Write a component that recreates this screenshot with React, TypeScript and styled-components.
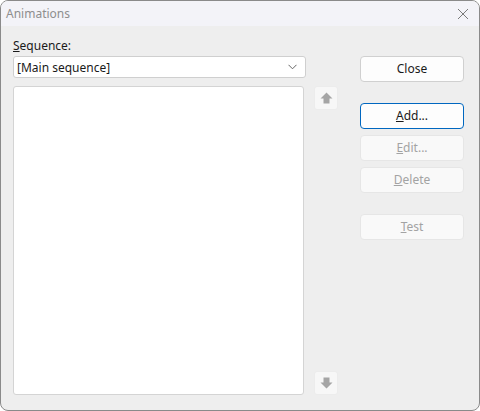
import styled, { createGlobalStyle } from "styled-components"

const GlobalStyle = createGlobalStyle`
  html, body {
    margin: 0;
    padding: 0;
    background: #ffffff;
  }
  * {
    box-sizing: border-box;
  }
`

const Window = styled.div`
  width: 480px;
  height: 411px;
  border: 1px solid #8a8a8a;
  border-radius: 8px;
  overflow: hidden;
  display: flex;
  flex-direction: column;
  font-family: "Noto Sans", "Open Sans", sans-serif;
  font-size: 12px;
  color: #1a1a1a;
  background: #eeeeee;
`

const TitleBar = styled.div`
  height: 25px;
  flex: none;
  display: flex;
  align-items: center;
  justify-content: space-between;
  padding: 0 10px 0 5px;
  background: #f3f3f8;
  color: #8e8e8e;
`

const CloseGlyph = styled.svg`
  width: 12px;
  height: 12px;
  margin-top: 1px;
`

const Body = styled.div`
  flex: 1;
  display: flex;
  padding: 0 14px 15px 12px;
`

const LeftCol = styled.div`
  width: 293px;
  display: flex;
  flex-direction: column;
  padding-top: 12px;
`

const Label = styled.label`
  height: 16px;
  line-height: 16px;
  margin-bottom: 2px;
`

const Combo = styled.div`
  height: 22px;
  background: #ffffff;
  border: 1px solid #cfcfcf;
  border-radius: 3px;
  display: flex;
  align-items: center;
  justify-content: space-between;
  padding: 0 8px 0 3px;
`

const Chevron = styled.svg`
  width: 9px;
  height: 6px;
`

const ListBox = styled.div`
  flex: 1;
  width: 291px;
  margin-top: 8px;
  background: #ffffff;
  border: 1px solid #d4d4d4;
  border-radius: 3px;
`

const ArrowCol = styled.div`
  width: 24px;
  margin: 60px 0 0 8px;
  display: flex;
  flex-direction: column;
  justify-content: space-between;
`

const ArrowButton = styled.div`
  width: 24px;
  height: 24px;
  background: #f7f7f7;
  border: 1px solid #ececec;
  border-radius: 3px;
  display: flex;
  align-items: center;
  justify-content: center;
`

const ButtonCol = styled.div`
  width: 104px;
  margin-left: 22px;
  padding-top: 30px;
  display: flex;
  flex-direction: column;
`

const Button = styled.div<{ $disabled?: boolean; $focused?: boolean; $gap: number }>`
  height: 26px;
  padding-bottom: 1px;
  margin-top: ${(p) => p.$gap}px;
  display: flex;
  align-items: center;
  justify-content: center;
  border-radius: 4px;
  background: ${(p) => (p.$disabled ? "#f9f9f9" : "#fdfdfd")};
  border: 1px solid
    ${(p) => (p.$focused ? "#0067c0" : p.$disabled ? "#e6e6e6" : "#d0d0d0")};
  color: ${(p) => (p.$disabled ? "#a3a3a3" : "#1a1a1a")};
`

const Arrow = ({ down }: { down?: boolean }) => (
  <svg width="13" height="12" viewBox="0 0 13 12" style={down ? { transform: "rotate(180deg)" } : undefined}>
    <path d="M6.5 0.5 L12.5 6.5 H9.5 V11.5 H3.5 V6.5 H0.5 Z" fill="#a5a5a5" />
  </svg>
)

const App = () => {
  return (
    <>
      <GlobalStyle />
      <Window>
        <TitleBar>
          <span>Animations</span>
          <CloseGlyph viewBox="0 0 12 12">
            <path d="M1 1 L11 11 M11 1 L1 11" stroke="#7a7a7a" strokeWidth="1" />
          </CloseGlyph>
        </TitleBar>
        <Body>
          <LeftCol>
            <Label>
              <u>S</u>equence:
            </Label>
            <Combo>
              <span>[Main sequence]</span>
              <Chevron viewBox="0 0 9 6">
                <path d="M0.5 0.8 L4.5 4.8 L8.5 0.8" fill="none" stroke="#666" strokeWidth="1" />
              </Chevron>
            </Combo>
            <ListBox />
          </LeftCol>
          <ArrowCol>
            <ArrowButton>
              <Arrow />
            </ArrowButton>
            <ArrowButton>
              <Arrow down />
            </ArrowButton>
          </ArrowCol>
          <ButtonCol>
            <Button $gap={0}>Close</Button>
            <Button $gap={21} $focused>
              <span>
                <u>A</u>dd...
              </span>
            </Button>
            <Button $gap={6} $disabled>
              <span>
                <u>E</u>dit...
              </span>
            </Button>
            <Button $gap={6} $disabled>
              <span>
                <u>D</u>elete
              </span>
            </Button>
            <Button $gap={21} $disabled>
              <span>
                <u>T</u>est
              </span>
            </Button>
          </ButtonCol>
        </Body>
      </Window>
    </>
  )
}

export default App
